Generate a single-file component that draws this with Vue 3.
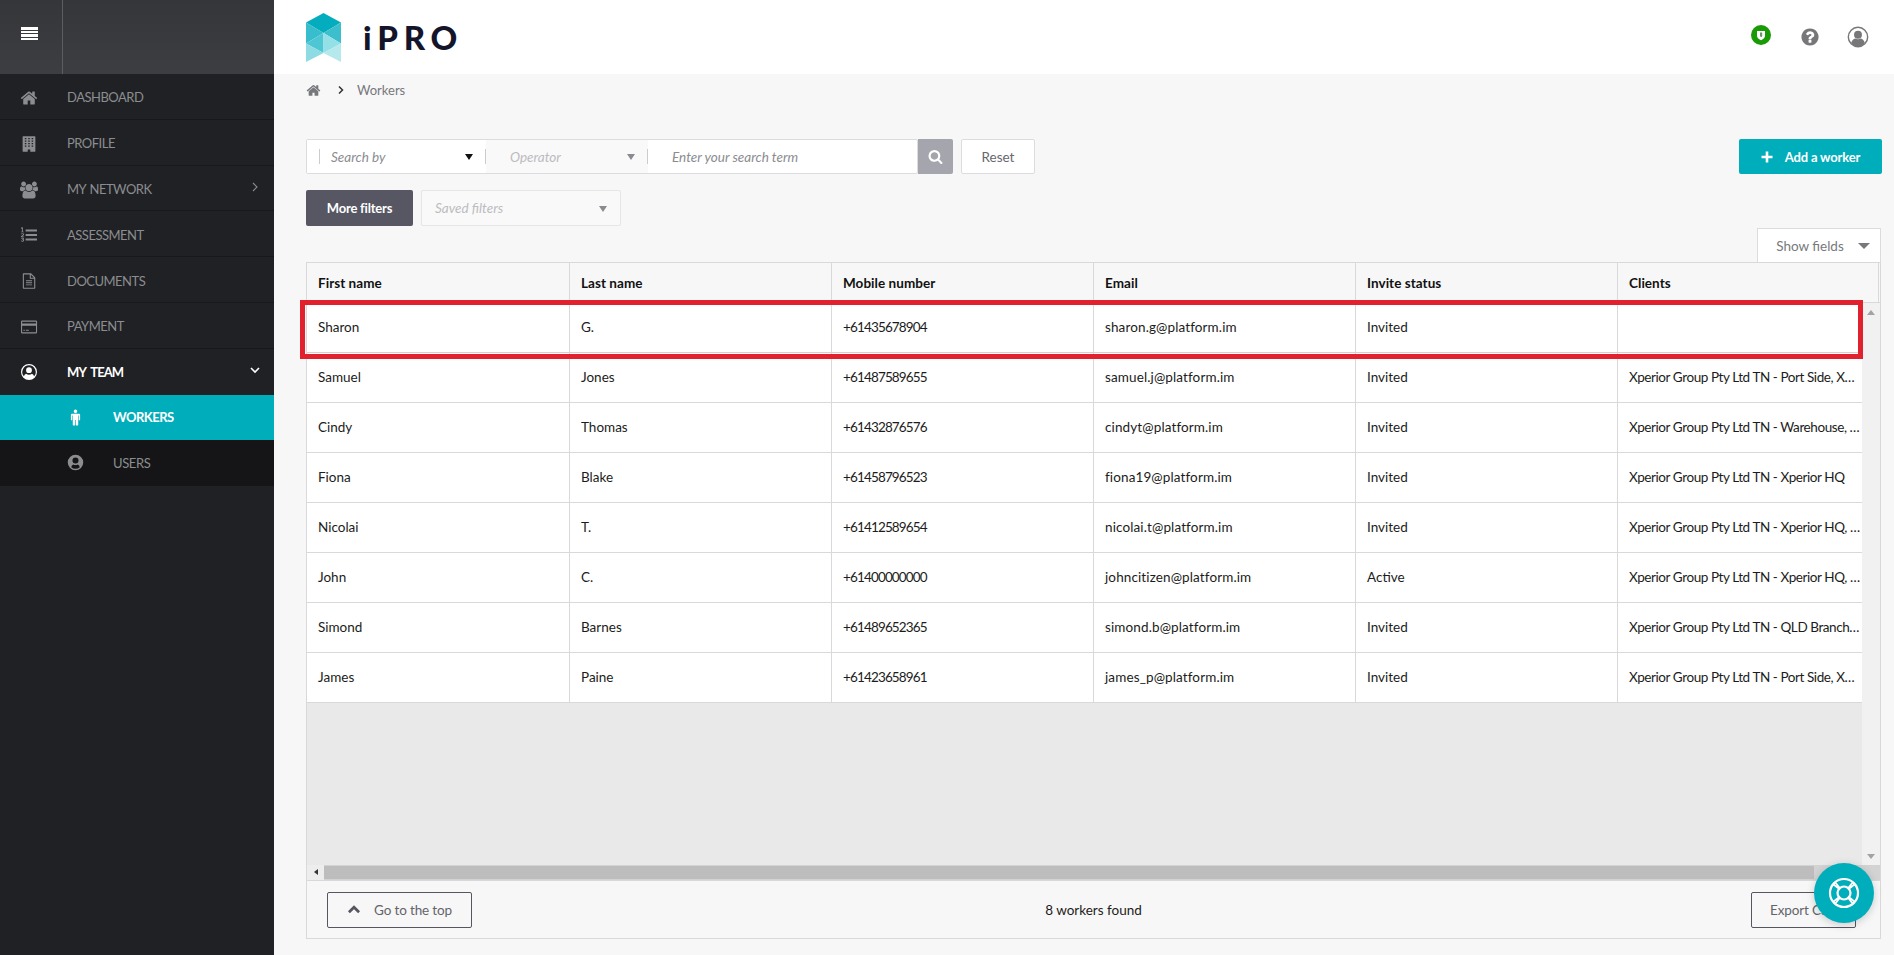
<script setup>
const fa = {
  home: 'M1472 992v480q0 26-19 45t-45 19h-384v-384h-256v384h-384q-26 0-45-19t-19-45v-480q0-1 .5-3t.5-3l575-474 575 474q1 2 1 6zm223-69l-62 74q-8 9-21 11h-3q-13 0-21-7l-692-577-692 577q-12 8-24 7-13-2-21-11l-62-74q-8-10-7-23.5t11-21.5l719-599q32-26 76-26t76 26l244 204v-195q0-14 9-23t23-9h192q14 0 23 9t9 23v408l219 182q10 8 11 21.5t-7 23.5z',
  building: 'M300 130h1190q40 0 40 40v1450q0 40-40 40h-470v-210h-250v210h-470q-40 0-40-40V170q0-40 40-40zM480 290v130h150V290zm340 0v130h150V290zm340 0v130h150V290zM480 540v130h150V540zm340 0v130h150V540zm340 0v130h150V540zM480 790v130h150V790zm340 0v130h150V790zm340 0v130h150V790zM480 1040v130h150v-130zm340 0v130h150v-130zm340 0v130h150v-130z',
  users: 'M593 896q-162 5-265 128h-134q-82 0-138-40.500t-56-118.500q0-353 124-353 6 0 43.500 21t97.500 42.500 119 21.500q67 0 133-23-5 37-5 66 0 139 81 256zm1071 637q0 120-73 189.500t-194 69.500h-874q-121 0-194-69.500t-73-189.500q0-53 3.500-103.500t14-109 26.500-108.500 43-97.500 62-81 85.500-53.500 111.500-20q10 0 43 21.500t73 48 107 48 135 21.500 135-21.500 107-48 73-48 43-21.500q61 0 111.500 20t85.500 53.500 62 81 43 97.500 26.500 108.500 14 109 3.500 103.500zm-1024-1277q0 106-75 181t-181 75-181-75-75-181 75-181 181-75 181 75 75 181zm704 384q0 159-112.500 271.500t-271.500 112.500-271.500-112.500-112.500-271.500 112.500-271.500 271.500-112.500 271.500 112.500 112.500 271.500zm576 225q0 78-56 118.500t-138 40.500h-134q-103-123-265-128 81-117 81-256 0-29-5-66 66 23 133 23 59 0 119-21.500t97.500-42.500 43.500-21q124 0 124 353zm-128-609q0 106-75 181t-181 75-181-75-75-181 75-181 181-75 181 75 75 181z',
  list: 'M560 340h1130v210H560zM560 790h1130v210H560zM560 1240h1130v210H560zM170 130h110v430h110v70H90v-70h100V240l-90 40v-80zM100 800q20-90 150-90 150 0 150 120 0 70-80 130l-110 80h200v70H90v-70l170-140q50-40 50-75 0-45-60-45-50 0-70 60zM100 1240q30-70 150-70 150 0 150 100 0 60-60 85 70 25 70 95 0 110-160 110-130 0-160-85l80-30q20 45 80 45 70 0 70-45 0-55-90-55v-65q80 0 80-45 0-40-60-40-50 0-65 35z',
  file: 'M1100 130H350q-70 0-70 70v1400q0 70 70 70h1100q70 0 70-70V550zM1080 270l300 300h-300zM390 240h580v440h440v880H390zM600 820h600v90H600zM600 1030h600v90H600zM600 1240h600v90H600z',
  card: 'M220 260h1360q120 0 120 120v1040q0 120-120 120H220q-120 0-120-120V380q0-120 120-120zM210 370v170h1380V370zm0 400v630q0 30 30 30h1320q30 0 30-30V770zM340 1160h140v110H340zM580 1160h300v110H580z',
  userCircle: 'M896 100a796 796 0 1 0 0 1592 796 796 0 0 0 0-1592zM896 230a666 666 0 0 1 510 1094q-60-190-210-250-130 90-300 90t-300-90q-150 60-210 250A666 666 0 0 1 896 230zM896 420a290 290 0 1 0 0 580 290 290 0 0 0 0-580z',
  userFill: 'M896 80a816 816 0 1 0 0 1632 816 816 0 0 0 0-1632zM896 360a320 320 0 1 1 0 640 320 320 0 0 1 0-640zM896 1560q-260 0-450-170 40-240 210-290 110 60 240 60t240-60q170 50 210 290-190 170-450 170z',
  male: 'M896 60a190 190 0 1 1 0 380 190 190 0 0 1 0-380zM520 500h752q110 0 110 110v520q0 60-70 60t-70-60V680h-60v1000q0 70-125 70t-125-70v-510h-72v510q0 70-125 70t-125-70V680h-60v450q0 60-70 60t-70-60V610q0-110 110-110z',
  question: 'M1024 1376v-192q0-14-9-23t-23-9h-192q-14 0-23 9t-9 23v192q0 14 9 23t23 9h192q14 0 23-9t9-23zm256-672q0-88-55.500-163t-138.500-116-170-41q-243 0-371 213-15 24 8 42l132 100q7 6 19 6 16 0 25-12 53-68 86-92 34-24 86-24 48 0 85.500 26t37.500 59q0 38-20 61t-68 45q-63 28-115.500 86.500t-52.500 125.500v36q0 14 9 23t23 9h192q14 0 23-9t9-23q0-19 21.500-49.500t54.500-49.500q32-18 49-28.500t46-35 44.500-48 28-60.500 12.500-81zm384 192q0 209-103 385.500t-279.500 279.500-385.500 103-385.500-103-279.500-279.500-103-385.500 103-385.500 279.500-279.500 385.500-103 385.500 103 279.500 279.500 103 385.500z',
  search: 'M1216 832q0-185-131.500-316.500t-316.500-131.500-316.500 131.500-131.500 316.500 131.500 316.500 316.500 131.500 316.500-131.500 131.500-316.500zm512 832q0 52-38 90t-90 38q-54 0-90-38l-343-342q-179 124-399 124-143 0-273.500-55.500t-225-150-150-225-55.500-273.500 55.500-273.500 150-225 225-150 273.500-55.500 273.500 55.500 225 150 150 225 55.500 273.500q0 220-124 399l343 343q37 37 37 90z'
}

const nav = [
  { label: 'DASHBOARD', icon: fa.home },
  { label: 'PROFILE', icon: fa.building },
  { label: 'MY NETWORK', icon: fa.users, box: '0 0 1920 1792', arrow: 'right' },
  { label: 'ASSESSMENT', icon: fa.list },
  { label: 'DOCUMENTS', icon: fa.file },
  { label: 'PAYMENT', icon: fa.card },
  { label: 'MY TEAM', icon: fa.userCircle, open: true, arrow: 'down' }
]

const sub = [
  { label: 'WORKERS', icon: fa.male, active: true },
  { label: 'USERS', icon: fa.userFill }
]

const columns = ['First name', 'Last name', 'Mobile number', 'Email', 'Invite status', 'Clients']

const rows = [
  ['Sharon', 'G.', '+61435678904', 'sharon.g@platform.im', 'Invited', ''],
  ['Samuel', 'Jones', '+61487589655', 'samuel.j@platform.im', 'Invited', 'Xperior Group Pty Ltd TN - Port Side, X…'],
  ['Cindy', 'Thomas', '+61432876576', 'cindyt@platform.im', 'Invited', 'Xperior Group Pty Ltd TN - Warehouse, …'],
  ['Fiona', 'Blake', '+61458796523', 'fiona19@platform.im', 'Invited', 'Xperior Group Pty Ltd TN - Xperior HQ'],
  ['Nicolai', 'T.', '+61412589654', 'nicolai.t@platform.im', 'Invited', 'Xperior Group Pty Ltd TN - Xperior HQ, …'],
  ['John', 'C.', '+61400000000', 'johncitizen@platform.im', 'Active', 'Xperior Group Pty Ltd TN - Xperior HQ, …'],
  ['Simond', 'Barnes', '+61489652365', 'simond.b@platform.im', 'Invited', 'Xperior Group Pty Ltd TN - QLD Branch…'],
  ['James', 'Paine', '+61423658961', 'james_p@platform.im', 'Invited', 'Xperior Group Pty Ltd TN - Port Side, X…']
]
</script>

<template>
  <div class="page">
    <aside class="sidebar">
      <div class="side-top">
        <div class="burger"><span></span><span></span><span></span><span></span></div>
      </div>
      <nav>
        <a v-for="item in nav" :key="item.label" class="nav-row" :class="{ open: item.open }">
          <svg class="nav-icon" :viewBox="item.box || '0 0 1792 1792'"><path :d="item.icon" fill="currentColor" fill-rule="evenodd" /></svg>
          <span class="nav-label">{{ item.label }}</span>
          <svg v-if="item.arrow === 'right'" class="nav-arrow" viewBox="0 0 10 10"><path d="M3 1l4 4-4 4" fill="none" stroke="currentColor" stroke-width="1.1" /></svg>
          <svg v-if="item.arrow === 'down'" class="nav-arrow" viewBox="0 0 10 10"><path d="M1 3l4 4 4-4" fill="none" stroke="currentColor" stroke-width="1.6" /></svg>
        </a>
        <div class="submenu">
          <a v-for="item in sub" :key="item.label" class="sub-row" :class="{ active: item.active }">
            <svg class="sub-icon" viewBox="0 0 1792 1792"><path :d="item.icon" fill="currentColor" fill-rule="evenodd" /></svg>
            <span>{{ item.label }}</span>
          </a>
        </div>
      </nav>
    </aside>

    <main class="main">
      <header class="topbar">
        <div class="brand">
          <svg class="logo" viewBox="0 0 35 49">
            <polygon points="17.500,0 35,9.500 17.500,20 0,9.500" fill="#04adbe" />
            <polygon points="0,9.500 17.500,20 0,30.500" fill="#38bdcc" />
            <polygon points="35,9.500 17.500,20 35,30.500" fill="#3dbecd" />
            <polygon points="0,30.500 17.500,20 17.500,40" fill="#4fc6d3" />
            <polygon points="35,30.500 17.500,20 17.500,40" fill="#93e0e7" />
            <polygon points="0,30.500 17.500,40 0,49" fill="#8edbe3" />
            <polygon points="35,30.500 17.500,40 35,49" fill="#b5e9ed" />
          </svg>
          <span class="wordmark">iPRO</span>
        </div>
        <div class="top-icons">
          <svg class="ti shield" viewBox="0 0 20 20">
            <circle cx="10" cy="10" r="10" fill="#1a9a06" />
            <path d="M6 6h8v4.500q0 3-4 4.800-4-1.800-4-4.800z" fill="#fff" />
            <path d="M9 7.500h2.200v3q0 1-1.100 1.800-1.100-.8-1.100-1.800z" fill="#6f8f70" />
          </svg>
          <svg class="ti help" viewBox="0 0 1792 1792"><path :d="fa.question" fill="#77777a" /></svg>
          <svg class="ti user" viewBox="0 0 20 20">
            <circle cx="10" cy="10" r="8.800" fill="#fff" stroke="#77777a" stroke-width="1.300" />
            <circle cx="10" cy="8" r="3.600" fill="#77777a" />
            <path d="M3.800 15.500q1-3.700 3.700-4.200 2.500 1.300 5 0 2.700.5 3.700 4.200-2.500 3.200-6.200 3.200t-6.200-3.200z" fill="#77777a" />
          </svg>
        </div>
      </header>

      <div class="crumbs">
        <svg class="crumb-home" viewBox="0 0 1792 1792"><path :d="fa.home" fill="currentColor" /></svg>
        <svg class="crumb-sep" viewBox="0 0 10 10"><path d="M3 1.500l3.500 3.500-3.500 3.500" fill="none" stroke="#333" stroke-width="1.500" /></svg>
        <span>Workers</span>
      </div>

      <section class="filters">
        <div class="filter-row">
          <div class="searchbar">
            <div class="seg seg-by">
              <span class="ph">Search by</span>
              <i class="caret dark"></i>
            </div>
            <div class="seg seg-op">
              <span class="ph faint">Operator</span>
              <i class="caret"></i>
            </div>
            <div class="seg seg-term"><span class="ph">Enter your search term</span></div>
          </div>
          <button class="search-btn">
            <svg viewBox="0 0 1792 1792"><path :d="fa.search" fill="#fff" /></svg>
          </button>
          <button class="reset-btn">Reset</button>
          <button class="add-btn">
            <svg viewBox="0 0 12 12"><path d="M6 0.500v11M0.500 6h11" stroke="#fff" stroke-width="2.600" /></svg>
            <span>Add a worker</span>
          </button>
        </div>
        <div class="filter-row second">
          <button class="more-btn">More filters</button>
          <div class="saved">
            <span class="ph faint">Saved filters</span>
            <i class="caret"></i>
          </div>
        </div>
      </section>

      <div class="fields-row">
        <button class="fields-btn"><span>Show fields</span><i class="caret wide"></i></button>
      </div>

      <section class="grid">
        <div class="grid-head">
          <div v-for="c in columns" :key="c" class="hcell">{{ c }}</div>
        </div>
        <div class="grid-mid">
          <div class="grid-body">
            <div v-for="(r, i) in rows" :key="i" class="row" :class="{ first: i === 0 }">
              <div v-for="(v, j) in r" :key="j" class="cell" :class="'col' + j">{{ v }}</div>
            </div>
          </div>
          <div class="vscroll">
            <i class="sc-up"></i>
            <i class="sc-down"></i>
          </div>
          <div class="highlight"></div>
        </div>
        <div class="hscroll">
          <i class="sc-left"></i>
          <div class="thumb"></div>
        </div>
        <div class="grid-foot">
          <button class="ghost top-btn">
            <svg viewBox="0 0 12 8"><path d="M1.500 6.500L6 2l4.500 4.500" fill="none" stroke="#55565f" stroke-width="2.400" /></svg>
            <span>Go to the top</span>
          </button>
          <span class="count">8 workers found</span>
          <button class="ghost export-btn">Export CSV</button>
        </div>
      </section>
    </main>

    <button class="fab">
      <svg viewBox="0 0 32 32" fill="none" stroke="#fff">
        <circle cx="16" cy="16" r="14" stroke-width="2.200" />
        <circle cx="16" cy="16" r="6.500" stroke-width="2.200" />
        <path d="M7 5l5.500 7M25 5l-5.500 7M7 27l5.500-7M25 27l-5.500-7M5 7l7 5.500M27 7l-7 5.500M5 25l7-5.500M27 25l-7-5.500" stroke-width="1.800" />
      </svg>
    </button>
  </div>
</template>

<style scoped>
.page {
  display: flex;
  width: 1894px;
  height: 955px;
  overflow: hidden;
  position: relative;
  background: #f7f7f7;
  font-family: Lato, "Noto Sans", sans-serif;
  font-size: 14px;
  color: #222;
}
.sidebar {
  width: 274px;
  flex: none;
  background: #202124;
}
.side-top {
  height: 74px;
  background: linear-gradient(#353639, #3d3e42);
}
.burger {
  width: 63px;
  height: 74px;
  box-sizing: border-box;
  border-right: 1px solid #5c5d61;
  padding: 0 3px 7px 0;
  display: flex;
  flex-direction: column;
  gap: 1px;
  align-items: center;
  justify-content: center;
}
.burger span {
  width: 17px;
  height: 2.500px;
  background: #fff;
}
.nav-row {
  height: 45.800px;
  box-sizing: border-box;
  display: flex;
  align-items: center;
  position: relative;
  padding: 2px 0 0 67px;
  border-bottom: 1px solid #17181a;
  color: #8b8d90;
}
.nav-row.open {
  color: #fff;
  font-weight: 700;
  border-bottom: 0;
  padding-top: 0;
}
.nav-label {
  font-size: 13px;
  letter-spacing: -0.500px;
  word-spacing: 1px;
}
.nav-row.open .nav-label {
  letter-spacing: -0.900px;
  word-spacing: 3px;
}
.nav-icon {
  position: absolute;
  left: 20px;
  top: 15px;
  width: 18px;
  height: 18px;
}
.nav-row.open .nav-icon {
  top: 14px;
}
.nav-arrow {
  position: absolute;
  right: 14px;
  top: 16px;
  width: 10px;
  height: 10px;
}
.sub-row {
  height: 45.800px;
  display: flex;
  align-items: center;
  padding-left: 113px;
  position: relative;
  background: #151517;
  color: #8b8d90;
  font-size: 13px;
  letter-spacing: -0.400px;
}
.sub-row.active {
  background: #00adbb;
  color: #fff;
  font-weight: 700;
  letter-spacing: -0.500px;
}
.sub-icon {
  position: absolute;
  left: 67px;
  top: 14px;
  width: 17px;
  height: 17px;
}
.main {
  flex: 1;
  min-width: 0;
  padding: 0 13px 0 32px;
  position: relative;
}
.topbar {
  height: 74px;
  margin: 0 -13px 0 -32px;
  padding: 0 25px 0 32px;
  background: #fff;
  display: flex;
  align-items: center;
  justify-content: space-between;
}
.brand {
  display: flex;
  align-items: center;
  gap: 22px;
}
.logo {
  width: 35px;
  height: 49px;
}
.wordmark {
  font-size: 33px;
  line-height: 40px;
  font-weight: 900;
  letter-spacing: 5.800px;
  color: #14152b;
}
.top-icons {
  display: flex;
  align-items: center;
}
.ti {
  display: block;
}
.shield {
  width: 20px;
  height: 20px;
  margin-top: -4px;
}
.help {
  width: 20px;
  height: 20px;
  margin-left: 29px;
}
.user {
  width: 22px;
  height: 22px;
  margin-left: 27px;
}
.crumbs {
  height: 32px;
  display: flex;
  align-items: center;
  color: #77787c;
  font-size: 13px;
}
.crumb-home {
  width: 15px;
  height: 15px;
}
.crumb-sep {
  width: 10px;
  height: 10px;
  margin: 0 11px 0 15px;
}
.filters {
  padding-top: 33px;
}
.filter-row {
  display: flex;
  align-items: stretch;
  height: 35px;
}
.filter-row.second {
  margin-top: 16px;
  height: 36px;
}
.searchbar {
  display: flex;
  width: 612px;
  box-sizing: border-box;
  border: 1px solid #dcdcde;
  border-radius: 2px;
  background: #fff;
}
.seg {
  display: flex;
  align-items: center;
  position: relative;
}
.seg-by {
  width: 179px;
  padding-left: 24px;
  box-sizing: border-box;
  background: #fff;
}
.seg-by::before {
  content: "";
  position: absolute;
  left: 12px;
  top: 9px;
  bottom: 9px;
  width: 1px;
  background: #ccc;
}
.seg-by::after,
.seg-op::after {
  content: "";
  position: absolute;
  right: 0;
  top: 9px;
  bottom: 9px;
  width: 1px;
  background: #ccc;
}
.seg-op {
  width: 162px;
  padding-left: 24px;
  box-sizing: border-box;
  background: #f9f9f9;
}
.seg-term {
  flex: 1;
  padding-left: 24px;
}
.ph {
  font-style: italic;
  color: #8b8c90;
  font-size: 13.500px;
}
.ph.faint {
  color: #bcbcc0;
}
.caret {
  position: absolute;
  right: 13px;
  top: 50%;
  margin-top: -2.500px;
  border-left: 4.500px solid transparent;
  border-right: 4.500px solid transparent;
  border-top: 6px solid #8a8b90;
}
.caret.dark {
  border-top-color: #111;
}
.caret.wide {
  position: static;
  margin: 0 0 0 14px;
  border-left-width: 6px;
  border-right-width: 6px;
  border-top-width: 6px;
  border-top-color: #77787c;
}
button {
  font-family: inherit;
  cursor: pointer;
}
.search-btn {
  width: 35px;
  border: 0;
  padding: 0;
  margin-left: 0;
  background: #a4a5ad;
  border-radius: 0 2px 2px 0;
  display: flex;
  align-items: center;
  justify-content: center;
}
.search-btn svg {
  width: 15px;
  height: 15px;
}
.reset-btn {
  width: 74px;
  margin-left: 8px;
  border: 1px solid #dcdcde;
  border-radius: 2px;
  background: #fff;
  color: #67686e;
  font-size: 13.500px;
}
.add-btn {
  margin-left: auto;
  margin-right: -1px;
  width: 143px;
  border: 0;
  border-radius: 2px;
  background: #00adbb;
  color: #fff;
  font-weight: 700;
  font-size: 13px;
  letter-spacing: -0.150px;
  display: flex;
  align-items: center;
  justify-content: center;
  gap: 12px;
  padding: 0;
}
.add-btn svg {
  width: 12px;
  height: 12px;
}
.more-btn {
  width: 107px;
  border: 0;
  border-radius: 2px;
  background: #565763;
  color: #fff;
  font-weight: 700;
  font-size: 13px;
  letter-spacing: -0.200px;
  padding: 0;
}
.saved {
  width: 200px;
  margin-left: 8px;
  box-sizing: border-box;
  border: 1px solid #e6e6e8;
  border-radius: 2px;
  background: #f9f9f9;
  display: flex;
  align-items: center;
  padding-left: 13px;
  position: relative;
}
.fields-row {
  display: flex;
  justify-content: flex-end;
  margin-top: 2px;
  height: 34px;
}
.fields-btn {
  width: 124px;
  box-sizing: border-box;
  border: 1px solid #dcdcde;
  border-bottom: 0;
  background: #fff;
  color: #77787c;
  font-size: 13.500px;
  display: flex;
  align-items: center;
  justify-content: center;
  padding: 0 0 0 8px;
}
.grid {
  box-sizing: border-box;
  height: 677px;
  border: 1px solid #d9d9db;
  display: flex;
  flex-direction: column;
  background: #f7f7f7;
}
.grid-head {
  height: 39px;
  flex: none;
  display: flex;
  margin-right: 1px;
  border-right: 1px solid #d9d9db;
  box-sizing: border-box;
}
.hcell {
  width: 262px;
  flex: none;
  box-sizing: border-box;
  padding-left: 11px;
  border-right: 1px solid #d9d9db;
  font-weight: 700;
  color: #111;
  font-size: 13.500px;
  letter-spacing: 0.050px;
  display: flex;
  align-items: center;
}
.hcell:first-child {
  width: 263px;
}
.hcell:last-child {
  border-right: 0;
}
.grid-mid {
  flex: 1;
  display: flex;
  position: relative;
  min-height: 0;
  border-top: 1px solid #d9d9db;
}
.grid-body {
  flex: 1;
  min-width: 0;
  overflow: hidden;
  background: #e9e9e9;
}
.row {
  display: flex;
  height: 50px;
  box-sizing: border-box;
  background: #fff;
  border-bottom: 1px solid #d9d9db;
}
.row.first {
  border-bottom-color: #e8c6ca;
}
.cell {
  width: 262px;
  flex: none;
  box-sizing: border-box;
  padding: 0 0 2px 11px;
  border-right: 1px solid #d9d9db;
  font-size: 13.500px;
  color: #1c1c20;
  display: flex;
  align-items: center;
  white-space: nowrap;
  overflow: hidden;
}
.cell.col0 {
  width: 263px;
}
.cell.col2 {
  letter-spacing: -0.850px;
}
.cell.col3 {
  letter-spacing: 0.120px;
}
.cell.col5 {
  letter-spacing: -0.420px;
  border-right: 0;
}
.vscroll {
  width: 18px;
  flex: none;
  background: #f1f1f1;
  position: relative;
}
.sc-up,
.sc-down {
  position: absolute;
  left: 5px;
  border-left: 4px solid transparent;
  border-right: 4px solid transparent;
}
.sc-up {
  top: 7px;
  border-bottom: 5px solid #a3a3a3;
}
.sc-down {
  bottom: 6px;
  border-top: 5px solid #a3a3a3;
}
.highlight {
  position: absolute;
  left: -7px;
  top: -3px;
  width: 1563px;
  height: 59px;
  box-sizing: border-box;
  border: 5px solid #e2212e;
  pointer-events: none;
}
.hscroll {
  height: 15px;
  flex: none;
  background: #d3d3d3;
  position: relative;
  padding-left: 17px;
  box-sizing: border-box;
  display: flex;
}
.hscroll::before {
  content: "";
  position: absolute;
  left: 0;
  top: 0;
  bottom: 0;
  width: 17px;
  background: #ededed;
}
.sc-left {
  position: absolute;
  left: 7px;
  top: 4px;
  border-top: 3.500px solid transparent;
  border-bottom: 3.500px solid transparent;
  border-right: 4px solid #333;
  z-index: 1;
}
.thumb {
  width: 1490px;
  height: 13px;
  margin-top: 1px;
  background: #bdbdbd;
}
.grid-foot {
  flex: none;
  height: 58px;
  box-sizing: border-box;
  border-top: 1px solid #d9d9db;
  display: flex;
  align-items: center;
  justify-content: space-between;
  padding: 0 24px 0 20px;
  position: relative;
}
.ghost {
  height: 36px;
  box-sizing: border-box;
  border: 1px solid #55565f;
  border-radius: 2px;
  background: transparent;
  color: #63646b;
  font-size: 13.500px;
  letter-spacing: -0.150px;
  display: flex;
  align-items: center;
  justify-content: center;
  padding: 0;
}
.top-btn {
  width: 145px;
  gap: 13px;
}
.top-btn svg {
  width: 14px;
  height: 9px;
}
.export-btn {
  width: 105px;
}
.count {
  position: absolute;
  left: 0;
  right: 0;
  text-align: center;
  font-size: 13.500px;
  color: #1c1c20;
  pointer-events: none;
}
.fab {
  position: absolute;
  left: 1814px;
  top: 863px;
  width: 60px;
  height: 60px;
  padding: 0;
  border: 0;
  border-radius: 50%;
  background: #00adbb;
  box-shadow: 0 2px 8px rgba(0, 0, 0, 0.18);
  display: flex;
  align-items: center;
  justify-content: center;
}
.fab svg {
  width: 32px;
  height: 32px;
}
</style>
